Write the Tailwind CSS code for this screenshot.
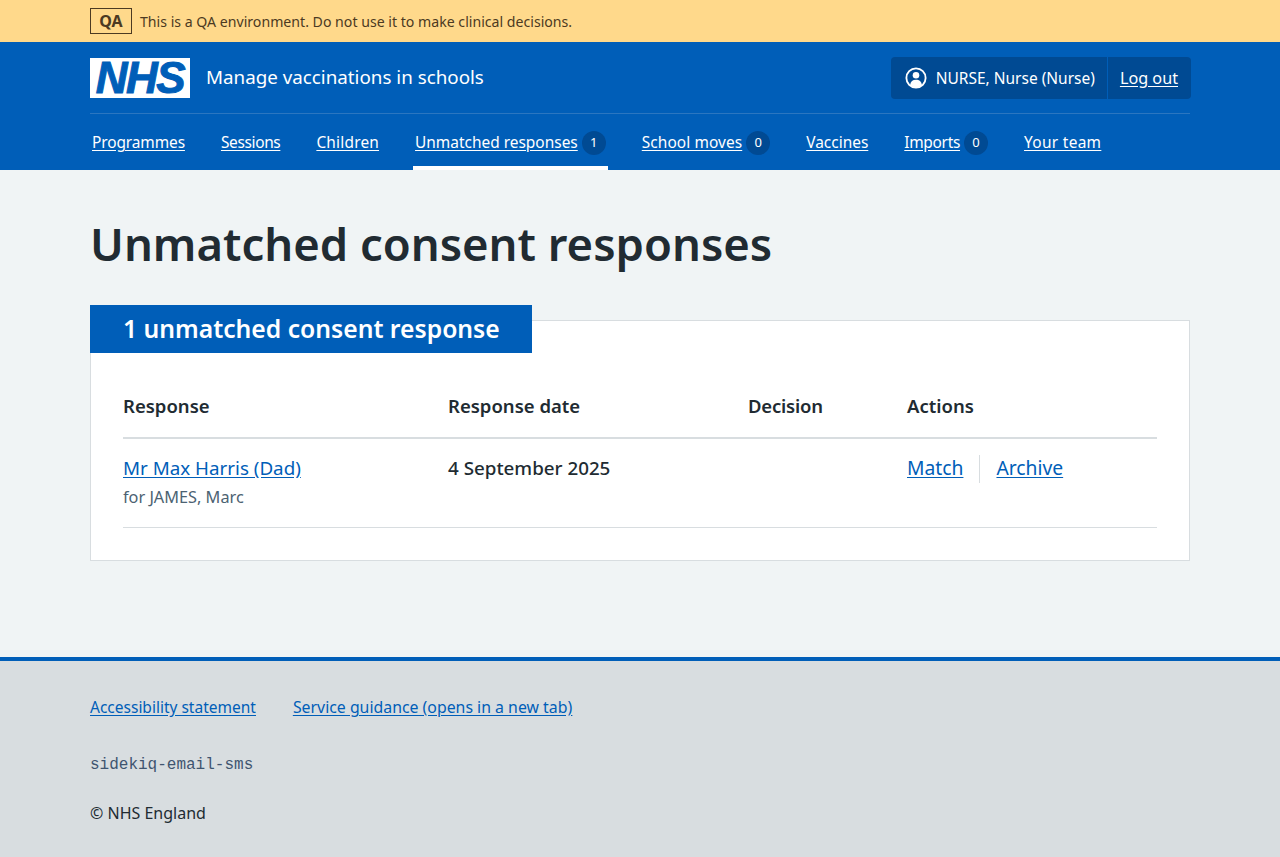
<!DOCTYPE html>
<html lang="en">
<head>
  <meta charset="UTF-8" />
  <meta name="viewport" content="width=device-width, initial-scale=1.0" />
  <script src="https://cdn.jsdelivr.net/npm/@tailwindcss/browser@4"></script>
  <title>Unmatched consent responses</title>
</head>
<body class="bg-[#f0f4f5] text-[#212b32] font-['Noto_Sans',sans-serif] min-h-[857px] flex flex-col">
  <!-- environment banner -->
  <div class="bg-[#ffd98b] h-[42px]">
    <div class="w-[1100px] mx-auto flex items-center h-full gap-2 text-[#4c3a22] text-[14.13px]">
      <strong class="border border-[#4c3a22] h-[26px] w-[42px] flex items-center justify-center text-[16px] font-bold">QA</strong>
      <span class="pt-[2px]">This is a QA environment. Do not use it to make clinical decisions.</span>
    </div>
  </div>

  <!-- header -->
  <header class="bg-[#005eb8] h-[128px] text-white">
    <div class="w-[1100px] mx-auto">
      <div class="flex items-center justify-between h-[72px] border-b border-[#2b76c0]">
        <div class="flex items-center gap-4">
          <div class="bg-white w-[100px] h-[40px] flex items-center justify-center">
            <span class="font-['Liberation_Sans',sans-serif] font-bold italic text-[#005eb8] text-[44px] tracking-[-1.5px] leading-none [-webkit-text-stroke:1px_#005eb8]">NHS</span>
          </div>
          <span class="text-[18.8px]">Manage vaccinations in schools</span>
        </div>
        <div class="flex items-center h-[42px] bg-[#004a93] rounded-[4px] mr-[-1px]">
          <div class="flex items-center gap-[9px] pl-[14px] pr-3 h-full border-r border-[#005eb8] text-[15.5px]">
            <svg class="w-[22px] h-[22px]" viewBox="0 0 24 24" fill="none">
              <circle cx="12" cy="12" r="10.5" stroke="white" stroke-width="2" />
              <circle cx="12" cy="9" r="3.6" fill="white" />
              <path d="M5.5 20c.4-4 3-6 6.5-6s6.1 2 6.5 6a10 10 0 0 1-13 0z" fill="white" />
            </svg>
            <span class="pt-[2px]">NURSE, Nurse (Nurse)</span>
          </div>
          <a href="#" class="pl-3 pr-[13px] pt-[2px] underline underline-offset-2 text-[16.2px]">Log out</a>
        </div>
      </div>
      <nav class="flex h-[56px] text-[15.45px]">
        <a href="#" class="flex items-center px-[2px] pt-[2px] mr-[32px] tracking-[-0.1px]"><span class="underline underline-offset-2">Programmes</span></a>
        <a href="#" class="flex items-center px-[2px] pt-[2px] mr-[32px] tracking-[-0.35px]"><span class="underline underline-offset-2">Sessions</span></a>
        <a href="#" class="flex items-center px-[2px] pt-[2px] mr-[32px] tracking-[0.2px]"><span class="underline underline-offset-2">Children</span></a>
        <a href="#" class="flex items-center gap-1 px-[2px] mr-[32px] border-b-4 border-white pt-[6px]">
          <span class="underline underline-offset-2">Unmatched responses</span>
          <span class="w-6 h-6 rounded-full bg-[#004a93] flex items-center justify-center text-[13px]">1</span>
        </a>
        <a href="#" class="flex items-center gap-1 px-[2px] pt-[2px] mr-[32px]">
          <span class="underline underline-offset-2 tracking-[0.08px]">School moves</span>
          <span class="w-6 h-6 rounded-full bg-[#004a93] flex items-center justify-center text-[13px]">0</span>
        </a>
        <a href="#" class="flex items-center px-[2px] pt-[2px] mr-[32px]"><span class="underline underline-offset-2">Vaccines</span></a>
        <a href="#" class="flex items-center gap-1 px-[2px] pt-[2px] mr-[32px]">
          <span class="underline underline-offset-2 tracking-[-0.3px]">Imports</span>
          <span class="w-6 h-6 rounded-full bg-[#004a93] flex items-center justify-center text-[13px]">0</span>
        </a>
        <a href="#" class="flex items-center px-[2px] pt-[2px] tracking-[0.3px]"><span class="underline underline-offset-2">Your team</span></a>
      </nav>
    </div>
  </header>

  <!-- main -->
  <main class="w-[1100px] mx-auto pt-[45px] flex-1">
    <h1 class="text-[45.4px] font-semibold leading-[56px]">Unmatched consent responses</h1>
    <section class="relative bg-white border border-[#d8dde0] mt-[49px] h-[241px] px-8">
      <h2 class="absolute left-[-1px] top-[-16px] bg-[#005eb8] text-white text-[24.7px] font-semibold h-[48px] w-[442px] pl-[33px] flex items-center">1 unmatched consent response</h2>
      <div class="grid grid-cols-[325px_300px_159px_1fr] pt-[72px] text-[18.8px]">
        <div class="font-semibold text-[18.5px] leading-[25px] h-[46px] border-b-2 border-[#d8dde0]">Response</div>
        <div class="font-semibold text-[18.5px] leading-[25px] h-[46px] border-b-2 border-[#d8dde0]">Response date</div>
        <div class="font-semibold text-[18.5px] tracking-[-0.2px] leading-[25px] h-[46px] border-b-2 border-[#d8dde0]">Decision</div>
        <div class="font-semibold text-[18.5px] leading-[25px] h-[46px] border-b-2 border-[#d8dde0]">Actions</div>
        <div class="h-[89px] border-b border-[#d8dde0] pt-[15px]">
          <a href="#" class="block text-[#005eb8] underline underline-offset-2 leading-[28px]">Mr Max Harris (Dad)</a>
          <p class="text-[#4c6272] text-[16.3px] leading-6 mt-[3px]">for JAMES, Marc</p>
        </div>
        <div class="h-[89px] border-b border-[#d8dde0] pt-[15px] font-medium leading-[28px]">4 September 2025</div>
        <div class="h-[89px] border-b border-[#d8dde0]"></div>
        <div class="h-[89px] border-b border-[#d8dde0] pt-4">
          <div class="flex items-center text-[19.3px] leading-[28px]">
            <a href="#" class="text-[#005eb8] underline underline-offset-2 pr-4 border-r border-[#d8dde0] h-[28px] leading-[26px]">Match</a>
            <a href="#" class="text-[#005eb8] underline underline-offset-2 ml-4 h-[28px] leading-[26px]">Archive</a>
          </div>
        </div>
      </div>
    </section>
  </main>

  <!-- footer -->
  <footer class="bg-[#d8dde0] border-t-4 border-[#005eb8] h-[200px] text-[16px]">
    <div class="w-[1100px] mx-auto pt-[34px]">
      <div class="flex gap-[37px] text-[#005eb8] underline underline-offset-2 leading-6">
        <a href="#" class="text-[15.5px]">Accessibility statement</a>
        <a href="#" class="text-[15.85px]">Service guidance (opens in a new tab)</a>
      </div>
      <p class="font-['Liberation_Mono',monospace] text-[#3f5570] text-[16px] leading-6 mt-[34px]">sidekiq-email-sms</p>
      <p class="mt-[24px] leading-6">© NHS England</p>
    </div>
  </footer>
</body>
</html>
